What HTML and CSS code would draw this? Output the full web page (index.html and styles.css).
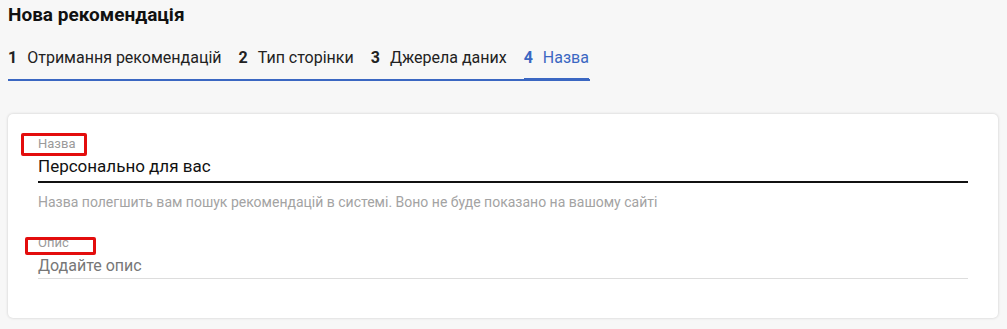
FILE: index.html
```html
<html>
<head>
    <link rel="stylesheet" href="styles.css">
</head>
<body>
    <h1 class="title">Нова рекомендація</h1>
    <div class="steps">
        <div class="step"><b>1</b>Отримання рекомендацій</div>
        <div class="step"><b>2</b>Тип сторінки</div>
        <div class="step"><b>3</b>Джерела даних</div>
        <div class="step active"><b>4</b>Назва</div>
    </div>
    <div class="card">
        <div class="field">
            <label class="label"><span class="mark mark-name"></span>Назва</label>
            <div class="value">Персонально для вас</div>
            <div class="hint">Назва полегшить вам пошук рекомендацій в системі. Воно не буде показано на вашому сайті</div>
        </div>
        <div class="field field-desc">
            <label class="label"><span class="mark mark-desc"></span>Опис</label>
            <div class="value empty">Додайте опис</div>
        </div>
    </div>
</body>
</html>
```

FILE: styles.css
```css
body {
    margin: 0;
    padding: 0 9px 0 8px;
    font-family: Roboto, "Noto Sans", sans-serif;
    background-color: #f7f7f7;
    color: #1a1a1a;
}

.title {
    margin: 0;
    padding-top: 4px;
    font-size: 19px;
    font-weight: bold;
    line-height: 22px;
    color: #111111;
}

.steps {
    display: flex;
    width: 582px;
    margin-top: 21px;
    border-bottom: 2px solid #3b67c2;
}

.step {
    display: flex;
    gap: 10px;
    padding-right: 17px;
    padding-bottom: 10px;
    font-size: 16px;
    line-height: 22px;
    color: #222222;
}

.step b {
    font-weight: bold;
}

.step.active {
    padding-right: 0;
    padding-bottom: 12px;
    margin-bottom: -2px;
    color: #3b67c2;
    box-shadow: inset 0 -3px 0 #3b67c2;
}

.card {
    margin-top: 33px;
    padding: 22px 30px 39px 30px;
    background-color: #ffffff;
    border-radius: 5px;
    box-shadow: 0 0 3px rgba(0, 0, 0, 0.18);
}

.field {
    position: relative;
}

.field-desc {
    margin-top: 25px;
}

.label {
    position: relative;
    display: block;
    font-size: 13px;
    line-height: 15px;
    color: #9a9a9a;
}

.mark {
    position: absolute;
    border: 3px solid #e30d0d;
    border-radius: 2px;
}

.mark-name {
    left: -17px;
    top: -3px;
    width: 60px;
    height: 17px;
}

.mark-desc {
    left: -13px;
    top: 2px;
    width: 65px;
    height: 12px;
}

.value {
    padding: 5px 0;
    font-size: 17px;
    line-height: 20px;
    color: #111111;
    border-bottom: 2px solid #111111;
}

.value.empty {
    padding: 6px 0 2px;
    font-size: 16px;
    color: #777777;
    border-bottom: 1px solid #dddddd;
}

.hint {
    margin-top: 11px;
    font-size: 14px;
    line-height: 16px;
    color: #a3a3a3;
}
```
